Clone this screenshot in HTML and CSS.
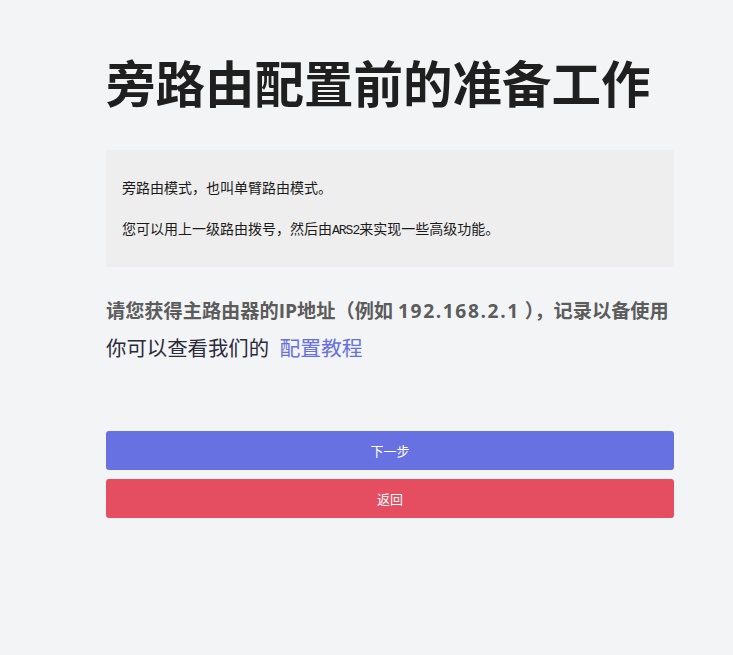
FILE: index.html
```html
<!DOCTYPE html>
<html lang="zh">
<head>
<meta charset="utf-8">
<link rel="stylesheet" href="styles.css">
</head>
<body>
<main class="page">
  <h1 class="title">旁路由配置前的准备工作</h1>
  <div class="note">
    <p>旁路由模式，也叫单臂路由模式。</p>
    <p>您可以用上一级路由拨号，然后由<span class="mono">ARS2</span>来实现一些高级功能。</p>
  </div>
  <p class="tip">请您获得主路由器的IP地址（例如 <span class="ip">192.168.2.1</span> ），记录以备使用</p>
  <p class="guide">你可以查看我们的 <a class="link" href="#">配置教程</a></p>
  <div class="actions">
    <button class="btn btn-next">下一步</button>
    <button class="btn btn-back">返回</button>
  </div>
</main>
</body>
</html>
```

FILE: styles.css
```css
html, body {
  margin: 0;
  padding: 0;
  background: #f3f4f6;
}
body {
  font-family: "Open Sans", "Noto Sans CJK SC", sans-serif;
  color: #333;
}
.page {
  width: 568px;
  margin-left: 106px;
  padding-top: 46px;
}
.title {
  margin: 0;
  font-size: 49.5px;
  line-height: 72px;
  font-weight: 700;
  color: #1f1f1f;
  font-family: "Noto Sans CJK SC", sans-serif;
  white-space: nowrap;
}
.note {
  margin-top: 32px;
  background: #eeeeee;
  padding: 27px 16px 29px;
  display: flex;
  flex-direction: column;
  gap: 21px;
  font-family: "Noto Sans CJK SC", sans-serif;
  font-size: 14px;
  line-height: 20px;
  color: #1a1a1a;
}
.note p { margin: 0; }
.mono {
  font-family: "Liberation Mono", monospace;
  font-size: 13px;
  line-height: 1;
  letter-spacing: -1px;
}
.tip {
  margin: 30px 0 0;
  font-size: 19.2px;
  line-height: 28px;
  font-weight: 700;
  color: #5c5c5c;
  white-space: nowrap;
}
.ip {
  letter-spacing: 1.6px;
}
.guide {
  margin: 8px 0 0;
  font-size: 20.4px;
  line-height: 30px;
  color: #2a2a3a;
  white-space: nowrap;
}
.link {
  margin-left: 5px;
  font-size: 20.8px;
  color: #6770e0;
  text-decoration: none;
}
.actions {
  margin-top: 68px;
  display: flex;
  flex-direction: column;
  gap: 9px;
}
.btn {
  display: block;
  width: 100%;
  height: 39px;
  border: none;
  border-radius: 3px;
  color: #fff;
  font-family: "Noto Sans CJK SC", sans-serif;
  font-size: 13px;
}
.btn-next { background: #6771e2; }
.btn-back { background: #e54e60; }
```
